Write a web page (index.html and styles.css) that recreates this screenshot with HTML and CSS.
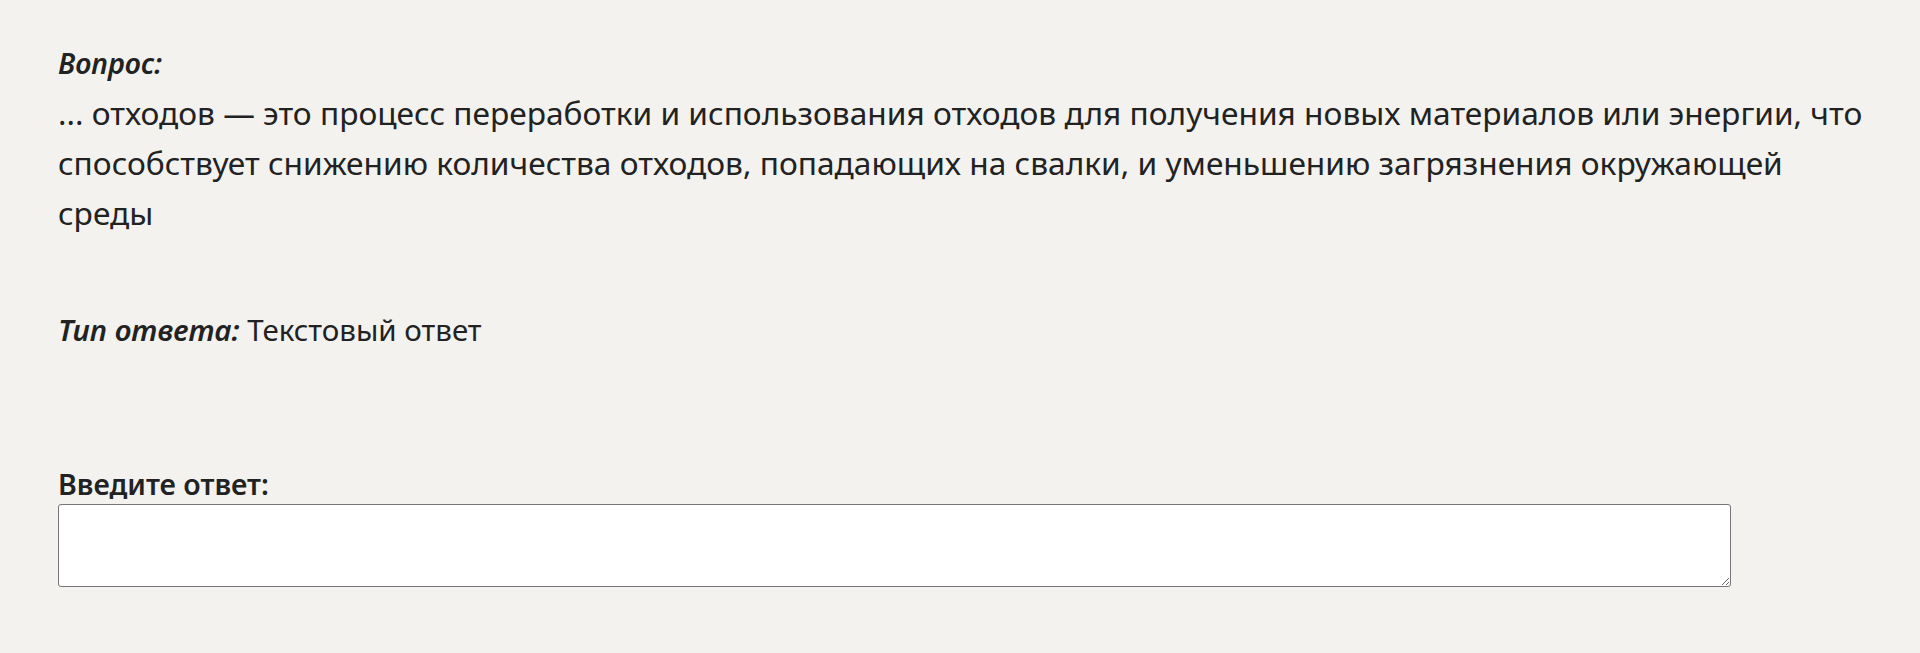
FILE: index.html
```html
<!DOCTYPE html>
<html lang="ru">
<head>
    <meta charset="UTF-8">
    <meta name="viewport" content="width=device-width, initial-scale=1.0">
    <title>Вопрос</title>
    <link rel="stylesheet" href="styles.css">
</head>
<body>
    <div class="quiz">
        <div class="question">
            <div class="caption"><em>Вопрос:</em></div>
            <p class="question-text">... отходов — это процесс переработки и использования отходов для получения новых материалов или энергии, что способствует снижению количества отходов, попадающих на свалки, и уменьшению загрязнения окружающей среды</p>
        </div>

        <div class="answer-type"><em>Тип ответа:</em> Текстовый ответ</div>

        <label class="answer-label" for="answer">Введите ответ:</label>
        <textarea id="answer" class="answer-input"></textarea>
    </div>
</body>
</html>
```

FILE: styles.css
```css
body {
    margin: 0;
    background-color: #f3f2ef;
    color: #222;
    font-family: "Noto Sans", "Open Sans", sans-serif;
    font-size: 28px;
    line-height: 50px;
}
.quiz {
    width: 1815px;
    padding: 38px 0 0 58px;
}
.caption {
    font-size: 28.5px;
}
.question-text {
    margin: 0;
    font-size: 31.7px;
}
.caption em,
.answer-type em {
    font-weight: 600;
}
.answer-type {
    margin-top: 67px;
    font-size: 29.5px;
}
.answer-label {
    display: block;
    margin-top: 111px;
    font-size: 28.5px;
    font-weight: 600;
    line-height: 36px;
}
.answer-input {
    display: block;
    width: 1673px;
    height: 83px;
    margin-top: 2px;
    box-sizing: border-box;
    border: 1px solid #767676;
    border-radius: 3px;
    background: #fff;
}
```
